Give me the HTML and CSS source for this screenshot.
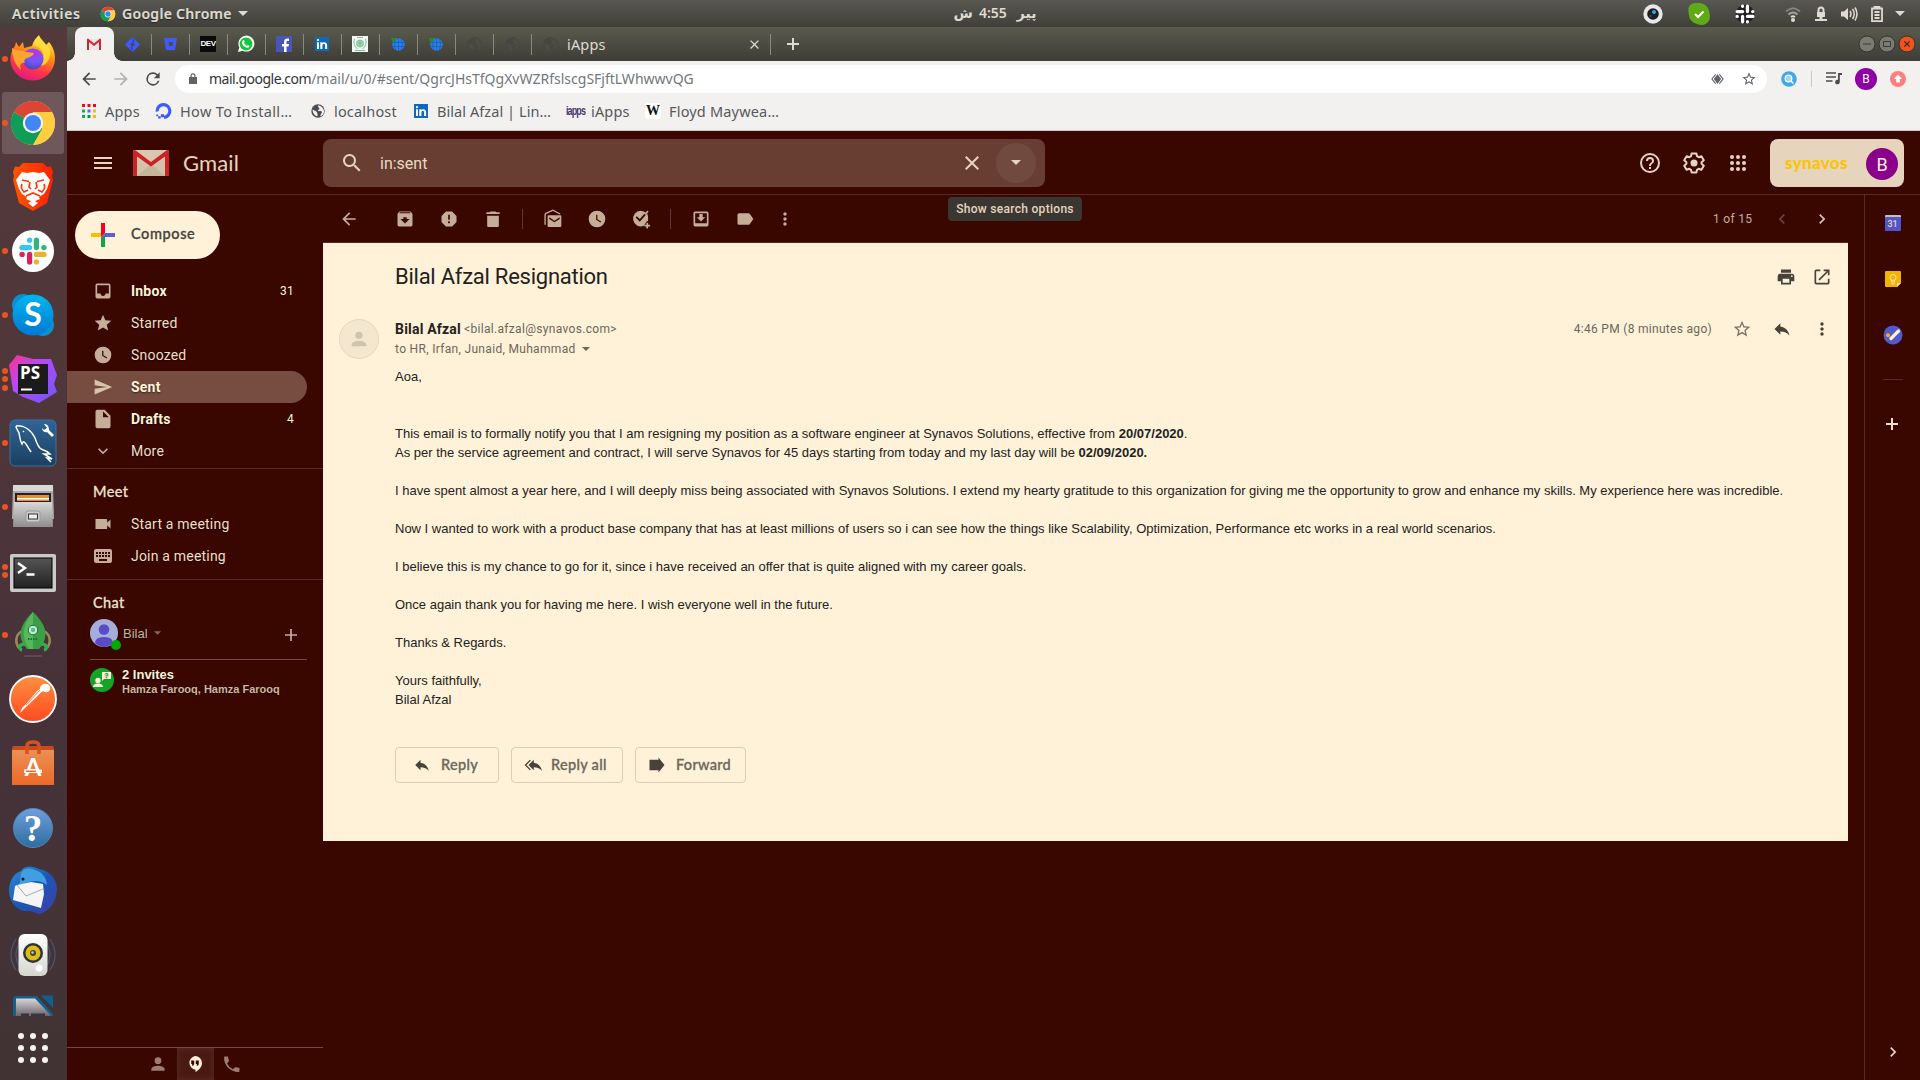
FILE: index.html
```html
<!DOCTYPE html>
<html lang="en">
<head>
<meta charset="utf-8">
<title>Bilal Afzal Resignation - Gmail</title>
<link rel="stylesheet" href="styles.css">
</head>
<body>
<svg class="defs" width="0" height="0" aria-hidden="true">
  <defs>
    <linearGradient id="ffGrad" x1="0.7" y1="0" x2="0.3" y2="1"><stop offset="0" stop-color="#fff44f"/><stop offset="0.35" stop-color="#ff980e"/><stop offset="0.7" stop-color="#ff3647"/><stop offset="1" stop-color="#e31587"/></linearGradient>
    <radialGradient id="ffGlobe" cx="0.6" cy="0.2" r="0.9"><stop offset="0" stop-color="#b833e1"/><stop offset="0.5" stop-color="#7059ff"/><stop offset="1" stop-color="#4a3ea8"/></radialGradient>
    <linearGradient id="braveGrad" x1="0" y1="0" x2="1" y2="0"><stop offset="0" stop-color="#ff5500"/><stop offset="1" stop-color="#ff2000"/></linearGradient>
    <linearGradient id="skyGrad" x1="0" y1="0" x2="0" y2="1"><stop offset="0" stop-color="#00b7f0"/><stop offset="1" stop-color="#0078d4"/></linearGradient>
    <linearGradient id="psGrad" x1="0" y1="0" x2="1" y2="1"><stop offset="0" stop-color="#ff318c"/><stop offset="0.4" stop-color="#b74af7"/><stop offset="1" stop-color="#6b57ff"/></linearGradient>
    <linearGradient id="sqlGrad" x1="0" y1="0" x2="0" y2="1"><stop offset="0" stop-color="#2f6596"/><stop offset="1" stop-color="#1c3f60"/></linearGradient>
    <linearGradient id="metal" x1="0" y1="0" x2="0" y2="1"><stop offset="0" stop-color="#d8d8d8"/><stop offset="1" stop-color="#8e8e8e"/></linearGradient>
    <linearGradient id="termGrad" x1="0" y1="0" x2="0" y2="1"><stop offset="0" stop-color="#555"/><stop offset="1" stop-color="#222"/></linearGradient>
    <linearGradient id="postGrad" x1="0" y1="0" x2="0" y2="1"><stop offset="0" stop-color="#ff9040"/><stop offset="1" stop-color="#ff4a20"/></linearGradient>
    <linearGradient id="softGrad" x1="0" y1="0" x2="0" y2="1"><stop offset="0" stop-color="#e8935a"/><stop offset="1" stop-color="#ee6a26"/></linearGradient>
    <linearGradient id="helpGrad" x1="0" y1="0" x2="0" y2="1"><stop offset="0" stop-color="#6f9fdb"/><stop offset="1" stop-color="#2d6d9f"/></linearGradient>
    <linearGradient id="birdGrad" x1="0" y1="0" x2="1" y2="1"><stop offset="0" stop-color="#2a8fd8"/><stop offset="0.5" stop-color="#1d56b8"/><stop offset="1" stop-color="#3b3fa8"/></linearGradient>
    <linearGradient id="spkGrad" x1="0" y1="0" x2="0" y2="1"><stop offset="0" stop-color="#ffffff"/><stop offset="1" stop-color="#d5d5d0"/></linearGradient>
    <linearGradient id="pageGrad" x1="0" y1="0" x2="0" y2="1"><stop offset="0" stop-color="#d5d5d8"/><stop offset="0.5" stop-color="#5a4c52"/></linearGradient>
  </defs>
  <symbol id="chrome" viewBox="0 0 48 48">
    <circle cx="24" cy="24" r="22" fill="#ffcd40"/>
    <path d="M24 24 4.900 13A22 22 0 0 1 43 13H24Z" fill="#db4437"/>
    <path d="M4.900 13A22 22 0 0 0 24 46l9.500-16.500L24 24Z" fill="#0f9d58"/>
    <path d="M43 13a22 22 0 0 1-19 33l9.500-16.500V13Z" fill="#ffcd40"/>
    <circle cx="24" cy="24" r="10.200" fill="#f1f1f1"/><circle cx="24" cy="24" r="8" fill="#4285f4"/>
  </symbol>
  <symbol id="slack" viewBox="0 0 28 28">
    <g stroke-width="5.200" stroke-linecap="round" fill="none">
      <path d="M3 10.600h7.600" stroke="#36c5f0"/><path d="M10.600 3v.2" stroke="#36c5f0"/>
      <path d="M17.400 3v7.600" stroke="#2eb67d"/><path d="M25 10.600h-.2" stroke="#2eb67d"/>
      <path d="M17.400 17.400H25" stroke="#ecb22e"/><path d="M17.400 25v-.2" stroke="#ecb22e"/>
      <path d="M10.600 17.400V25" stroke="#e01e5a"/><path d="M3 17.400h.2" stroke="#e01e5a"/>
    </g>
  </symbol>
  <symbol id="linkedin" viewBox="0 0 14 14"><path fill="#0e6ab8" d="M0 0h14v14H0z"/><path fill="#fff" d="M2 5.300h2V12H2zM3 2a1.100 1.100 0 1 1 0 2.200A1.100 1.100 0 0 1 3 2zM5.300 5.300h1.900v.9c.8-1.500 4.900-1.700 4.900 1.700V12h-2V8.500c0-2-2.700-1.800-2.700 0V12H5.300z"/></symbol>
  <symbol id="world" viewBox="0 0 16 16"><circle cx="8.500" cy="8.500" r="6.200" fill="#2b7de9"/><path d="M2.500 6.500h12M2.500 10.500h12M8.500 2v13M5.500 3q-2 5.500 0 11M11.500 3q2 5.500 0 11" stroke="#1a56a8" stroke-width=".6" fill="none"/><path d="M1 2h5.500L3.500 8z" fill="#0e9a3a"/><circle cx="3.600" cy="3.600" r=".9" fill="#b33"/></symbol>
  <symbol id="globe" viewBox="0 0 24 24"><circle cx="12" cy="12" r="11.500"/><path class="land" d="M3 9c2 3 6 2 7 5s2 3 1 7c-5-1-9-6-8-12zM11 2c3 1 0 3 2 4s2 3 0 4-1 3 2 2 5 2 3 4-1 4-3 5c7-1 9-8 6-13-2-4-6-6-10-6z"/></symbol>
  <symbol id="gmail" viewBox="0 0 36 26"><rect width="36" height="26" rx="2" fill="#d9c8b0"/><path d="M4 26V8l14 9L32 8v18z" fill="#d3c2aa"/><path d="M4 26 18 14l14 12z" fill="#c7b59b"/><path d="M2 0 18 12 34 0q2 0 2 2v22q0 2-2 2h-2V6.500L18 16.500 4 6.500V26H2q-2 0-2-2V2q0-2 2-2z" fill="#cf2026"/></symbol>
  <symbol id="back" viewBox="0 0 24 24"><path d="M20 11H7.830l5.590-5.590L12 4l-8 8 8 8 1.410-1.410L7.830 13H20z"/></symbol>
  <symbol id="more" viewBox="0 0 24 24"><path d="M12 8c1.100 0 2-.9 2-2s-.9-2-2-2-2 .9-2 2 .9 2 2 2zm0 2c-1.100 0-2 .9-2 2s.9 2 2 2 2-.9 2-2-.9-2-2-2zm0 6c-1.100 0-2 .9-2 2s.9 2 2 2 2-.9 2-2-.9-2-2-2z"/></symbol>
  <symbol id="star" viewBox="0 0 24 24"><path d="M22 9.240l-7.190-.62L12 2 9.190 8.630 2 9.240l5.460 4.730L5.820 21 12 17.270 18.180 21l-1.630-7.030zM12 15.400l-3.760 2.270 1-4.280-3.320-2.880 4.380-.38L12 6.100l1.710 4.040 4.380.38-3.320 2.880 1 4.280z"/></symbol>
  <symbol id="reply" viewBox="0 0 24 24"><path d="M10 9V5l-7 7 7 7v-4.100c5 0 8.500 1.600 11 5.100-1-5-4-10-11-11z"/></symbol>
  <symbol id="person" viewBox="0 0 24 24"><path d="M12 12a4 4 0 1 0 0-8 4 4 0 0 0 0 8zm0 2c-2.670 0-8 1.340-8 4v2h16v-2c0-2.660-5.330-4-8-4z"/></symbol>
  <symbol id="clock" viewBox="0 0 24 24"><path d="M12 2a10 10 0 1 0 0 20 10 10 0 0 0 0-20zm4.200 14.200L11 13V7h1.500v5.200l4.500 2.700z"/></symbol>
  <symbol id="chev" viewBox="0 0 24 24"><path d="M10 6 8.590 7.410 13.170 12l-4.580 4.590L10 18l6-6z"/></symbol>
  <symbol id="plus" viewBox="0 0 24 24"><path d="M19 13h-6v6h-2v-6H5v-2h6V5h2v6h6z"/></symbol>
  <symbol id="down" viewBox="0 0 10 5"><path d="M0 0h10L5 5z"/></symbol>
  <symbol id="close" viewBox="0 0 24 24"><path d="M19 6.410 17.590 5 12 10.590 6.410 5 5 6.410 10.590 12 5 17.590 6.410 19 12 13.410 17.590 19 19 17.590 13.410 12z"/></symbol>
</svg>

<header class="panel">
  <div class="panel-left">
    <span class="panel-text activities">Activities</span>
    <svg class="app-ico"><use href="#chrome"/></svg>
    <span class="panel-text appname">Google Chrome</span>
    <svg class="caret"><use href="#down"/></svg>
  </div>
  <div class="clock" dir="rtl"><span class="day">پیر</span><span class="time">4:55</span><span class="ampm">ش</span></div>
  <div class="tray">
    <svg width="20" height="20" viewBox="0 0 20 20"><circle cx="10" cy="10" r="9.700" fill="#e8e8e8"/><circle cx="10" cy="10" r="5.800" fill="#1b1f26"/><circle cx="11" cy="8" r="2" fill="#3aa0e8"/><circle cx="7.500" cy="12" r="1" fill="#555"/></svg>
    <svg width="22" height="22" viewBox="0 0 22 22"><path fill="#60a917" d="M6 0h6c6 1 9 5 9.500 10 1.500 6-1 11-7 12C7 22 1 18 .8 11 0 5 0 2 6 0z"/><path d="m7 11 3 3 5.500-5.500" stroke="#fff" stroke-width="2.200" fill="none"/></svg>
    <svg width="20" height="20" viewBox="0 0 28 28"><circle cx="14" cy="14" r="13" fill="#222"/><g stroke="#fff" stroke-width="4.600" stroke-linecap="round"><path d="M3 10.600h7.600M10.600 3v.2M17.400 3v7.600M25 10.600h-.2M17.400 17.400H25M17.400 25v-.2M10.600 17.400V25M3 17.400h.2"/></g></svg>
    <svg width="16" height="16" viewBox="0 0 16 16" fill="none"><path d="M1 5.500q7-6.500 14 0" stroke="#85847f" stroke-width="2"/><path d="M3.500 8.500q4.500-4 9 0" stroke="#a5a49f" stroke-width="2"/><path d="M6 11q2-1.500 4 0" stroke="#dfdbd2" stroke-width="2"/><circle cx="8" cy="14" r="2" fill="#dfdbd2"/></svg>
    <svg width="14" height="16" viewBox="0 0 14 16" fill="#dfdbd2"><path d="M3.500 6V4a3.500 3.500 0 0 1 7 0v2h.5v5H8.500v2H13v2H1v-2h4.500v-2H3V6zm2 0h3V4a1.500 1.500 0 0 0-3 0z" /></svg>
    <svg width="18" height="16" viewBox="0 0 18 16"><path d="M1 5.500h3L8 2v12l-4-3.500H1z" fill="#dfdbd2"/><path d="M10 5q2 3 0 6M12.500 3q3.500 5 0 10M15 1.500q4 6.500 0 13" stroke="#dfdbd2" stroke-width="1.500" fill="none"/></svg>
    <svg width="14" height="18" viewBox="0 0 14 18"><path d="M2 3.500h10v12.700H2zM4.500 3V2h5v1M4.500 7h5M4.500 10h5M4.500 13h5" stroke="#dfdbd2" stroke-width="1.800" fill="none"/></svg>
    <svg class="caret"><use href="#down"/></svg>
  </div>
</header>

<div class="desktop">
<nav class="dock">
  <div class="app firefox"><i class="dots"><b></b></i>
    <svg viewBox="0 0 48 48"><path d="M30 1c1 4 5 6 7 10l3-3c5 6 7 13 5.500 21a22.500 22.500 0 0 1-43 3C0 25 2 17 6 12l1-4 3 5 4-5 1 6 8-2c1-5 4-8 7-11z" fill="url(#ffGrad)"/><circle cx="24" cy="25" r="10.500" fill="url(#ffGlobe)"/><path d="M3 14c5 3 9 2 14 4l8 1c-1 3-4 4-7 5-3 1-3 3-2 5-6-1-5 4-4 7-6-5-9-13-9-22z" fill="#ffa52e"/><path d="M24 12q5-1 9 5 4 8-1 15c7-2 10-9 9-16-2-5-8-8-11-14-3 3-5 6-6 10z" fill="#ffdf3e" opacity=".85"/></svg></div>
  <div class="app current"><i class="dots"><b></b></i><svg viewBox="0 0 48 48"><use href="#chrome"/></svg></div>
  <div class="app"><svg viewBox="0 0 48 48"><path d="M14 0h20l4 4 4-.5L44 9l-1 4 1 4-6 23-14 8-14-8L4 17l1-4-1-4 2-5.500 4 .5z" fill="url(#braveGrad)"/><path d="m13 9 5 1 6-1 6 1 5-1 6 8-3 9-3 5-5 3 1 2-7 3-7-3 1-2-5-3-3-5-3-9z" fill="#fff"/><path d="m24 37 5 3-5 4-5-4z" fill="#fff"/><path d="m13 17 7 1.500M35 17l-7 1.500M21 19l-1 5 2 2M27 19l1 5-2 2M13 21q-2 4 2 8l4-2M35 21q2 4-2 8l-4-2M17 33l7-3 7 3" stroke="#ff3a00" stroke-width="1.700" fill="none"/></svg></div>
  <div class="app"><i class="dots"><b></b></i><svg viewBox="0 0 48 48"><circle cx="24" cy="24" r="21" fill="#fff"/><use href="#slack" x="10" y="10" width="28" height="28"/></svg></div>
  <div class="app"><i class="dots"><b></b></i><svg viewBox="0 0 48 48"><circle cx="14" cy="14" r="11" fill="#0a90cf"/><circle cx="34" cy="34" r="11" fill="#0a90cf"/><circle cx="24" cy="24" r="20.500" fill="url(#skyGrad)"/><text x="24" y="35" text-anchor="middle" class="skype-s">S</text></svg></div>
  <div class="app"><i class="dots"><b></b><b></b><b></b></i><svg viewBox="0 0 48 48"><path d="M8 0l16 4 18 0 6 16-3 9 3 8-18 11-16-6-10-6L0 10z" fill="url(#psGrad)"/><path d="M9 9h30v30H9z" fill="#1b1b1b"/><path d="M12 33.500h11v2H12z" fill="#fff"/><text x="11" y="24" class="ps">PS</text></svg></div>
  <div class="app"><i class="dots"><b></b></i><svg viewBox="0 0 48 48"><rect x="1" y="1" width="46" height="46" rx="5" fill="url(#sqlGrad)" stroke="#3a72a4"/><path d="M7 7c8-1 15 4 19 12 2 6 3 9 6 11 3 1 7 3 9 5h-6l8 5-5-1 4 4M7 7c0 3 2 4 3 7 1 5 1 8 3 11 1-3 2-3 4 0l5 8M14 12l1 1" stroke="#fff" stroke-width="1.500" fill="none"/><path d="m35 5 3 4-3 2-2-2c0 3 3 5 5 4l5 5 2-2-5-5c0-4-2-6-5-6z" fill="#fff"/></svg></div>
  <div class="app"><i class="dots"><b></b></i><svg viewBox="0 0 48 48"><path d="M4 2h40l1 34H3z" fill="#aaa"/><path d="M4 2h40v6H4z" fill="#d9d9d9"/><path d="M6 10h36v9H6z" fill="#222"/><path d="M8 12h32v6H8z" fill="#e88b35"/><path d="M8 15h32v1.500H8z" fill="#fff"/><path d="M5 19h38l1 25H4z" fill="url(#metal)"/><rect x="17" y="28" width="14" height="11" rx="2" fill="#ccc" stroke="#999"/><rect x="19.500" y="31" width="9" height="5" fill="#eee" stroke="#333"/></svg></div>
  <div class="app"><i class="dots"><b></b><b></b></i><svg viewBox="0 0 48 48"><rect x="1" y="7" width="46" height="38" rx="2" fill="#c9c9c9"/><rect x="5" y="11" width="38" height="30" fill="url(#termGrad)" stroke="#000"/><path d="m9 16 7 5-7 5M17.500 27.500h8" stroke="#fff" stroke-width="2.400" fill="none"/></svg></div>
  <div class="app"><i class="dots"><b></b></i><svg viewBox="0 0 48 48"><path d="M13 20c-7 4-7 12-3 17M35 20c7 4 7 12 3 17" stroke="#9a8a5c" stroke-width="2.500" fill="none"/><path d="M24 1C8 16 9 28 18 38h12C39 28 40 16 24 1z" fill="#3c9f45"/><path d="M24 1C12 16 13 28 20 38h4z" fill="#55b85c"/><circle cx="24" cy="19" r="4.800" fill="#bfeecb" stroke="#1f6a3a"/><circle cx="24" cy="19" r="2.200" fill="#58b9a0"/><path d="M19 28h10" stroke="#1e7033" stroke-width="2" stroke-dasharray="1.500 1"/><path d="M16 33c-6 0-7 5-3 6M32 33c6 0 7 5 3 6" stroke="#2fae4e" stroke-width="3.500" fill="none"/><path d="M15 45h18" stroke="#6c6266"/></svg></div>
  <div class="app"><svg viewBox="0 0 48 48"><circle cx="24" cy="24" r="23" fill="url(#postGrad)" stroke="#fff" stroke-width="1.800"/><path d="M36 9a4.200 4.200 0 1 1-2 7L19 30l-8 8 2-5 4-4 12-14 2-1c0-3 2-5 5-5z" fill="#fff"/><path d="m17 30 14-15M20 31l13-14" stroke="#ff7434" stroke-width=".9"/></svg></div>
  <div class="app"><svg viewBox="0 0 48 48"><path d="M4 8h40l1 4v34H3V12z" fill="url(#softGrad)"/><path d="M4 7h40l1 4H3z" fill="#c94a1a"/><path d="M18 15V7q0-4 6-4t6 4v8" stroke="#d9501e" stroke-width="3.500" fill="none"/><text x="24" y="37" text-anchor="middle" class="soft-a">A</text><path d="M15 30.500h18v3.500H15z" fill="#fff"/><path d="M17 31.500h10v1.500H17z" fill="#ee6a26"/></svg></div>
  <div class="app"><svg viewBox="0 0 48 48"><circle cx="24" cy="25" r="19.500" fill="url(#helpGrad)" stroke="#4f88bd"/><text x="24" y="38" text-anchor="middle" class="help-q">?</text></svg></div>
  <div class="app"><svg viewBox="0 0 48 48"><path d="M12 4C16-2 24-1 30 2c10 1 18 10 18 20 0 12-8 23-18 25l-9-3C8 46 0 34 0 24 0 14 5 6 12 4z" fill="url(#birdGrad)"/><path d="M12 6c3-6 11-5 14-3 6 1 12 8 12 15-6-5-14-5-22-2l-6 5z" fill="#3f9fe0"/><path d="m8 18 14-3 12 2 1 10-3 14-28-8 2-14z" fill="#f5f5f5"/><path d="m8 18 9 11 17-7" stroke="#aaa" fill="none"/><circle cx="14" cy="12" r="1.500" fill="#111"/></svg></div>
  <div class="app"><svg viewBox="0 0 48 48"><path d="M7 8Q-3 24 7 39M41 8q10 16 0 31M11 11Q3 24 11 36M37 11q8 13 0 25" stroke="#4a5674" stroke-width="1.200" fill="none"/><rect x="9.500" y="3" width="29" height="42" rx="6" fill="url(#spkGrad)"/><circle cx="24" cy="22" r="10" fill="#333"/><circle cx="24" cy="22" r="7.500" fill="#e0bd15"/><circle cx="24" cy="22" r="3" fill="#444"/><circle cx="23.500" cy="21.500" r="1.200" fill="#ccc"/><circle cx="30" cy="37" r="3.500" fill="#fff"/></svg></div>
  <div class="app clipped"><svg viewBox="0 0 48 48"><path d="M4 6q0-4 3-4h21l16 18v26H4z" fill="#145f8c"/><path d="M7 4.500h19l15 16v26H7z" fill="url(#pageGrad)"/><path d="M32 1.500h12V14z" fill="#0f6090"/><path d="M12 19.500h8v3h-8zM22 19.500h14v3H22z" fill="#333843"/></svg></div>
  <div class="show-apps"><b></b><b></b><b></b><b></b><b></b><b></b><b></b><b></b><b></b></div>
</nav>

<main class="window">
  <div class="tabs">
    <div class="tab active"><svg width="14" height="12" viewBox="0 0 14 12"><path d="M0 1h14v11H0z" fill="#e9e9e9"/><path d="M1 .5 7 5.500l6-5q1 0 1 1V12h-2V4L7 8 2 4v8H0V1.500q0-1 1-1z" fill="#d8232a"/></svg></div>
    <div class="tab"><svg width="15" height="15" viewBox="0 0 15 15"><path d="m7.500 0 7.500 7.500L7.500 15 0 7.500z" fill="#3e5bfd"/><path d="m7.500 5 2.500 2.500L7.500 10 5 7.500z" fill="#4a4b43"/><path d="m7.500 0 2 5-2 0zM7.500 15l-2-5h2z" fill="#2338c0"/></svg></div>
    <div class="tab"><svg width="13" height="12" viewBox="0 0 13 12"><path d="M0 0h13l-2 12H2zM4.500 4l.8 4h3L9 4z" fill="#3e5bfd" fill-rule="evenodd"/></svg></div>
    <div class="tab"><span class="fav-dev">DEV</span></div>
    <div class="tab"><svg width="16" height="16" viewBox="0 0 24 24"><path d="M0 24 2 17A12 12 0 1 1 7 22z" fill="#fff"/><circle cx="12" cy="12" r="9.600" fill="#0bc93a"/><path d="M7.500 6.500c1-1 2 0 2.500 2l-1 1.500c1 2 2.500 3.500 4.500 4.500l1.500-1c2 .8 2.500 1.500 2 2.500-1 2-4 2-7 0s-4.500-5-4-7.500z" fill="#fff"/></svg></div>
    <div class="tab"><svg width="16" height="16" viewBox="0 0 16 16"><path d="M0 0h16v16H0z" fill="#4a55b8"/><path d="M8 16v-5.500H6V8h2V6c0-2.500 1.500-3.500 3.500-3.500H13v2.400h-1.200c-1 0-1.300.4-1.300 1.300V8H13l-.4 2.500h-2.100V16z" fill="#fff"/></svg></div>
    <div class="tab"><svg width="14" height="14"><use href="#linkedin"/></svg></div>
    <div class="tab"><svg width="16" height="16" viewBox="0 0 16 16"><path d="M0 0h16v16H0z" fill="#f2f7f3"/><circle cx="8" cy="7.500" r="3.500" fill="#a8d6b8" stroke="#6fb78c" stroke-width=".8"/><path d="M2.500 3q-2 6 3 10M13.500 3q2 6-3 10M5 1.500h6M3 14.500h10M8 5v5M6 7h4" stroke="#6fb78c" stroke-width=".9" fill="none"/></svg></div>
    <div class="tab"><svg width="16" height="16"><use href="#world"/></svg></div>
    <div class="tab"><svg width="16" height="16"><use href="#world"/></svg></div>
    <div class="tab"><svg class="fav-globe"><use href="#globe"/></svg></div>
    <div class="tab"><svg class="fav-globe"><use href="#globe"/></svg></div>
    <div class="tab wide"><svg class="fav-globe"><use href="#globe"/></svg><span class="tab-title">iApps</span><svg class="tab-close"><use href="#close"/></svg></div>
    <svg class="tab-new" viewBox="0 0 12 12"><path d="M6 0v12M0 6h12" stroke="#dedbd0" stroke-width="2"/></svg>
    <div class="win-btns">
      <svg viewBox="0 0 18 18"><circle cx="9" cy="9" r="8" fill="#7b7a73" stroke="#35352f"/><path d="M5 9h8" stroke="#3a3934"/></svg>
      <svg viewBox="0 0 18 18"><circle cx="9" cy="9" r="8" fill="#7b7a73" stroke="#35352f"/><path d="M5.500 6.500h7v5h-7z" stroke="#3a3934" fill="none"/></svg>
      <svg viewBox="0 0 18 18"><circle cx="9" cy="9" r="8" fill="#f0541e" stroke="#35352f"/><path d="m6.300 6.300 5.400 5.400m0-5.400-5.400 5.400" stroke="#4a1c08" stroke-width="1.200"/></svg>
    </div>
  </div>

  <div class="urlbar">
    <svg class="nav-ico"><use href="#back"/></svg>
    <svg class="nav-ico fwd"><use href="#back"/></svg>
    <svg class="nav-ico reload" viewBox="0 0 24 24"><path d="M17.650 6.350A8 8 0 1 0 19.730 14h-2.080A6 6 0 1 1 12 6c1.660 0 3.140.69 4.220 1.780L13 11h7V4z"/></svg>
    <div class="omnibox">
      <svg class="lock" viewBox="0 0 8 11"><path d="M1.500 4V2.700a2.500 2.500 0 0 1 5 0V4H8v7H0V4zm1.200 0h2.600V2.700a1.300 1.300 0 0 0-2.600 0z"/></svg>
      <span class="url"><span class="host">mail.google.com</span><span class="path">/mail/u/0/#sent/QgrcJHsTfQgXvWZRfslscgSFjftLWhwwvQG</span></span>
      <svg class="eye" viewBox="0 0 14 12"><path d="M5 1 1 6l4 5M9 1l4 5-4 5" stroke="#5f6368" stroke-width="1.200" fill="none"/><path d="m7 1 4 5-4 5-4-5z" fill="#5f6368"/></svg>
      <svg class="bm-star"><use href="#star"/></svg>
    </div>
    <svg class="ext" viewBox="0 0 16 16"><circle cx="8" cy="8" r="7.800" fill="#3fa9ee"/><circle cx="7.500" cy="7.500" r="3.300" fill="#9fd6fa" stroke="#fff" stroke-width="1.300"/><path d="m10 10 2.500 2.500" stroke="#fff" stroke-width="1.500"/></svg>
    <i class="ext-sep"></i>
    <svg class="playlist" viewBox="0 0 16 13"><path d="M0 1h10M0 5h10M0 9h6.500" stroke="#4c4c4c" stroke-width="1.700"/><path d="M12 1h4v2h-2.200v7A2.300 2.300 0 1 1 12 7.800z" fill="#4c4c4c"/></svg>
    <span class="profile">B</span>
    <svg class="update" viewBox="0 0 16 16"><circle cx="8" cy="8" r="8" fill="#ff7f7f"/><path d="m8 3.500 4.200 4.500H9.800v3.500H6.200V8H3.800z" fill="#fff"/></svg>
  </div>

  <div class="bookmarks">
    <svg class="bm-ico" viewBox="0 0 14 14"><path fill="#f02" d="M0 0h3v3H0zM5.500 0h3v3h-3zM11 0h3v3h-3z"/><path fill="#0ab04a" d="M0 5.500h3v3H0zM0 11h3v3H0z"/><path fill="#4a6cff" d="M5.500 5.500h3v3h-3z"/><path fill="#fb0" d="M11 5.500h3v3h-3zM11 11h3v3h-3z"/><path fill="#0a9a3a" d="M5.500 11h3v3h-3z"/></svg>
    <span class="bm apps">Apps</span>
    <svg class="bm-do" viewBox="0 0 16 16"><path d="M2 8a6 6 0 1 1 6.500 5.500" stroke="#3d5bfd" stroke-width="3" fill="none"/><path d="M5.500 10.500h3v3h-3zM3 12.500h2.300v2.200H3zM1.200 10.800H3v1.700H1.200z" fill="#3d5bfd"/></svg>
    <span class="bm install">How To Install…</span>
    <svg class="bm-globe"><use href="#globe"/></svg>
    <span class="bm local">localhost</span>
    <svg class="bm-ico"><use href="#linkedin"/></svg>
    <span class="bm profile-link">Bilal Afzal | Lin…</span>
    <span class="bm-iapps">iapps</span>
    <span class="bm iapps">iApps</span>
    <span class="bm-w">W</span>
    <span class="bm floyd">Floyd Maywea…</span>
  </div>

  <div class="gmail">
    <header class="ghead">
      <svg class="burger" viewBox="0 0 18 12"><path d="M0 0h18v2H0zM0 5h18v2H0zM0 10h18v2H0z"/></svg>
      <svg class="glogo"><use href="#gmail"/></svg>
      <span class="gname">Gmail</span>
      <div class="search">
        <svg class="mag" viewBox="0 0 24 24"><path d="M15.500 14h-.79l-.28-.27A6.500 6.500 0 1 0 13.730 14.430l.27.28v.79l5 4.990L20.490 19zm-6 0a4.500 4.500 0 1 1 0-9 4.500 4.500 0 0 1 0 9z"/></svg>
        <span class="query">in:sent</span>
        <svg class="clear"><use href="#close"/></svg>
        <div class="opts"><svg class="caret"><use href="#down"/></svg><span class="tooltip">Show search options</span></div>
      </div>
      <div class="gtools">
        <svg viewBox="0 0 24 24"><path d="M11 18h2v-2h-2zm1-16a10 10 0 1 0 0 20 10 10 0 0 0 0-20zm0 18a8 8 0 1 1 0-16 8 8 0 0 1 0 16zm0-14a4 4 0 0 0-4 4h2a2 2 0 1 1 4 0c0 2-3 1.750-3 5h2c0-2.250 3-2.500 3-5a4 4 0 0 0-4-4z"/></svg>
        <svg viewBox="0 0 24 24"><path d="M9.600 2.500h4.800l.6 2.700 1.700 1 2.700-.9 2.400 4-2.200 1.900v1.600l2.200 1.900-2.400 4-2.700-.9-1.700 1-.6 2.700H9.600L9 18.800l-1.700-1-2.700.9-2.400-4 2.200-1.900v-1.600L2.200 9.300l2.400-4 2.700.9 1.700-1z" fill="none" stroke="#e6d4bd" stroke-width="2" stroke-linejoin="round"/><circle cx="12" cy="12" r="3.500"/></svg>
        <svg viewBox="0 0 24 24"><circle cx="6" cy="6" r="2"/><circle cx="12" cy="6" r="2"/><circle cx="18" cy="6" r="2"/><circle cx="6" cy="12" r="2"/><circle cx="12" cy="12" r="2"/><circle cx="18" cy="12" r="2"/><circle cx="6" cy="18" r="2"/><circle cx="12" cy="18" r="2"/><circle cx="18" cy="18" r="2"/></svg>
      </div>
      <div class="account"><span class="brand">synavos</span><span class="face">B</span></div>
    </header>

    <div class="gbody">
      <aside class="side">
        <button class="compose"><svg viewBox="0 0 24 24"><path d="M10 0h4v10l-4 4z" fill="#f3031f"/><path d="M0 10h10v4H0z" fill="#fb0"/><path d="M10 14h4v10h-4z" fill="#0aa945"/><path d="M14 10h10v4H10z" fill="#5b5fd0"/></svg><span>Compose</span></button>
        <ul class="folders">
          <li class="bold"><svg viewBox="0 0 24 24"><path d="M19 3H5a2 2 0 0 0-2 2v14a2 2 0 0 0 2 2h14a2 2 0 0 0 2-2V5a2 2 0 0 0-2-2zm0 12h-4c0 1.660-1.350 3-3 3s-3-1.340-3-3H5V5h14z"/></svg><span>Inbox</span><em>31</em></li>
          <li><svg viewBox="0 0 24 24"><path d="M12 17.270 18.180 21l-1.640-7.030L22 9.240l-7.190-.61L12 2 9.190 8.630 2 9.240l5.460 4.730L5.820 21z"/></svg><span>Starred</span></li>
          <li><svg><use href="#clock"/></svg><span>Snoozed</span></li>
          <li class="bold selected"><svg viewBox="0 0 24 24"><path d="M2 21 23 12 2 3v7l15 2-15 2z"/></svg><span>Sent</span></li>
          <li class="bold"><svg viewBox="0 0 24 24"><path d="M14 1H5a2 2 0 0 0-2 2v18q0 2 2 2h14q2 0 2-2V8zm-2 2 7 7h-7z"/></svg><span>Drafts</span><em>4</em></li>
          <li><svg class="rot"><use href="#chev"/></svg><span>More</span></li>
        </ul>
        <section class="meet">
          <h3>Meet</h3>
          <ul class="folders">
            <li><svg viewBox="0 0 24 24"><path d="M17 10.500V7a1 1 0 0 0-1-1H3v12h13a1 1 0 0 0 1-1v-3.500l4 4v-11z"/></svg><span>Start a meeting</span></li>
            <li><svg class="kbd" viewBox="0 0 18 14"><path fill-rule="evenodd" d="M2 0h14q2 0 2 2v10q0 2-2 2H2q-2 0-2-2V2q0-2 2-2zm0 3v2h2V3zm3 0v2h2V3zm3 0v2h2V3zm3 0v2h2V3zm3 0v2h2V3zM2 6v2h2V6zm3 0v2h2V6zm3 0v2h2V6zm3 0v2h2V6zm3 0v2h2V6zM5 10v2h8v-2z"/></svg><span>Join a meeting</span></li>
          </ul>
        </section>
        <section class="chat">
          <h3>Chat</h3>
          <div class="me"><span class="me-face"><svg viewBox="0 0 28 28"><circle cx="14" cy="14" r="14" fill="#a5aedb"/><circle cx="14" cy="10.500" r="5.300" fill="#5a4bc4"/><path d="M5 24q0-6 9-6t9 6q-9 8-18 0z" fill="#5a4bc4"/></svg><i></i></span><span>Bilal</span><svg class="me-caret"><use href="#down"/></svg><svg class="me-plus" viewBox="0 0 12 12"><path d="M6 0v12M0 6h12" stroke="#c5ad98" stroke-width="1.700"/></svg></div>
          <div class="invites"><svg viewBox="0 0 24 24"><circle cx="12" cy="12" r="12" fill="#13a526"/><circle cx="8" cy="12.500" r="2.700" fill="#fff2d8"/><path d="M3 19q0-3.500 5-3.500t5 3.500zM12 4h9v7h-7l-2 2z" fill="#fff2d8"/><text x="16.500" y="10.300" text-anchor="middle" class="inv-q">?</text></svg><div><strong>2 Invites</strong><small>Hamza Farooq, Hamza Farooq</small></div></div>
        </section>
        <footer class="side-tabs">
          <svg class="st"><use href="#person"/></svg>
          <span class="st-on"><svg viewBox="0 0 14 16"><path d="M7 0a7 7 0 0 1 7 7c0 4-3 7-6.500 9v-2.200A7 7 0 0 1 7 0z"/><path d="M3.200 4.500H6.200V8q0 1.500-2 2V8h-1zM7.800 4.500h3V8q0 1.500-2 2V8h-1z" fill="#3a0700"/></svg></span>
          <svg class="st" viewBox="0 0 24 24"><path d="M20 16.500c-1.500 0-2.500-.2-3.600-.6-.4-.1-.8 0-1 .3l-2.200 2A15 15 0 0 1 6 11.300l2-2.200c.3-.3.400-.7.300-1C8 7 7.700 6 7.500 4.500c0-.8-.4-1.500-1-1.500H4C3 3 2.500 3.500 2.500 4.500A17 17 0 0 0 19.500 21.500c1 0 1.500-.5 1.500-1.500v-2.500c0-.6-.5-1-1-1z"/></svg>
        </footer>
      </aside>

      <section class="content">
        <div class="toolbar">
          <svg class="i-back"><use href="#back"/></svg>
          <svg viewBox="0 0 24 24"><path d="m20.500 5.200-1.400-1.700C18.900 3.200 18.500 3 18 3H6c-.5 0-.9.200-1.200.5L3.500 5.200C3.200 5.600 3 6 3 6.500V19a2 2 0 0 0 2 2h14a2 2 0 0 0 2-2V6.500c0-.5-.2-.9-.5-1.300zM12 17.500 6.500 12H10v-2h4v2h3.500zM5.100 5l.8-1h12l.9 1z"/></svg>
          <svg viewBox="0 0 24 24"><path d="M15.730 3H8.270L3 8.270v7.460L8.270 21h7.460L21 15.730V8.270zM12 17.300a1.300 1.300 0 1 1 0-2.600 1.300 1.300 0 0 1 0 2.600zm1-4.300h-2V7h2z"/></svg>
          <svg class="i-del" viewBox="0 0 24 24"><path d="M5 8v12q0 1.500 1.500 1.500h11Q19 21.500 19 20V8zM20 4h-4l-1-1H9L8 4H4v2h16z"/></svg>
          <i class="sep"></i>
          <svg viewBox="0 0 24 24"><path d="M5.500 9q0-1.500 1.500-1.500h13.500Q22 7.500 22 9v11q0 1.500-1.500 1.500H7Q5.500 21.500 5.500 20zm2 1v2l6.200 4 6.300-4v-2l-6.300 4z" fill-rule="evenodd"/><path d="M2.500 19V7q0-1 1-1.700L12 1.500 20.500 6" stroke="#c5ad98" stroke-width="1.600" fill="none"/></svg>
          <svg><use href="#clock"/></svg>
          <svg class="i-task" viewBox="0 0 24 24"><path d="M11.500 2a9.500 9.500 0 0 1 6 2.200l-7 7.800L7 8.800 5.500 10.200l5 5 9-10 1 4V14q-3 1-3.500 4l-2 2.500A9.500 9.500 0 1 1 11.500 2z"/><path d="m16.500 6.500 4-4M19.500 16.500v7M16 20h7" stroke="#c5ad98" stroke-width="2"/></svg>
          <i class="sep"></i>
          <svg viewBox="0 0 24 24"><path fill-rule="evenodd" d="M5 3h14a2 2 0 0 1 2 2v14a2 2 0 0 1-2 2H5a2 2 0 0 1-2-2V5c0-1.100.9-2 2-2zm0 2v12h14V5zM10 6h4v4h3l-5 5-5-5h3z"/></svg>
          <svg class="i-label" viewBox="0 0 24 24"><path d="M17.630 5.840C17.270 5.330 16.670 5 16 5H5a2 2 0 0 0-2 2v10a2 2 0 0 0 2 2h11c.67 0 1.270-.33 1.630-.84L22 12z"/></svg>
          <svg><use href="#more"/></svg>
          <span class="count">1 of 15</span>
          <svg class="prev"><use href="#chev"/></svg>
          <svg class="next"><use href="#chev"/></svg>
        </div>
        <article class="mail">
          <div class="subject"><h1>Bilal Afzal Resignation</h1>
            <svg viewBox="0 0 24 24"><path d="M19 8H5a3 3 0 0 0-3 3v6h4v4h12v-4h4v-6a3 3 0 0 0-3-3zm-3 11H8v-5h8zm3-7a1 1 0 1 1 0-2 1 1 0 0 1 0 2zM18 3H6v4h12z"/></svg>
            <svg viewBox="0 0 24 24"><path d="M19 19H5V5h5V3H5a2 2 0 0 0-2 2v14a2 2 0 0 0 2 2h14a2 2 0 0 0 2-2v-5h-2zM14 3v2h3.590l-9.830 9.830 1.410 1.410L19 6.410V10h2V3z"/></svg>
          </div>
          <div class="sender">
            <span class="avatar"><svg><use href="#person"/></svg></span>
            <div class="who">
              <p><b>Bilal Afzal</b><span>&lt;bilal.afzal@synavos.com&gt;</span></p>
              <p><span>to HR, Irfan, Junaid, Muhammad</span><svg class="to-caret"><use href="#down"/></svg></p>
            </div>
            <div class="meta"><span>4:46 PM (8 minutes ago)</span><svg class="mstar"><use href="#star"/></svg><svg><use href="#reply"/></svg><svg><use href="#more"/></svg></div>
          </div>
          <div class="text">Aoa,<br><br><br>This email is to formally notify you that I am resigning my position as a software engineer at Synavos Solutions, effective from <b>20/07/2020</b>.<br>As per the service agreement and contract, I will serve Synavos for 45 days starting from today and my last day will be <b>02/09/2020.</b><br><br>I have spent almost a year here, and I will deeply miss being associated with Synavos Solutions. I extend my hearty gratitude to this organization for giving me the opportunity to grow and enhance my skills. My experience here was incredible.<br><br>Now I wanted to work with a product base company that has at least millions of users so i can see how the things like Scalability, Optimization, Performance etc works in a real world scenarios.<br><br>I believe this is my chance to go for it, since i have received an offer that is quite aligned with my career goals.<br><br>Once again thank you for having me here. I wish everyone well in the future.<br><br>Thanks &amp; Regards.<br><br>Yours faithfully,<br>Bilal Afzal</div>
          <div class="actions">
            <button class="r1"><svg><use href="#reply"/></svg><span>Reply</span></button>
            <button class="r2"><svg viewBox="0 0 24 24"><path d="M8.500 5.500 2 12l6.500 6.500" stroke="#47433a" stroke-width="1.800" fill="none"/><path d="M13 9V5l-7 7 7 7v-4.100c5 0 8.500 1.600 11 5.100-1-5-4-10-11-11z"/></svg><span>Reply all</span></button>
            <button class="r3"><svg viewBox="0 0 24 24"><path d="M2 5h12V2l8 10-8 10v-3H2z"/></svg><span>Forward</span></button>
          </div>
        </article>
      </section>

      <aside class="rail">
        <span class="cal">31</span>
        <svg class="keep" viewBox="0 0 16 16"><path d="M1 0h14q1 0 1 1v11l-4 4H1q-1 0-1-1V1q0-1 1-1z" fill="#f5b400"/><path d="M12 16v-4h4z" fill="#fbe29a"/><circle cx="8" cy="6.500" r="3" stroke="#fbe6b0" fill="none"/><path d="M6.500 9v2h3V9M6.500 12.800h3" stroke="#fbe6b0" fill="none"/></svg>
        <svg class="tasks" viewBox="0 0 20 20"><circle cx="10" cy="10" r="9.500" fill="#5558cc"/><path d="m8 13.500 7.500-7.500" stroke="#fff2d8" stroke-width="3.200" stroke-linecap="round"/><circle cx="5" cy="10.200" r="2" fill="#f5b400"/></svg>
        <i></i>
        <svg class="rplus" viewBox="0 0 12 12"><path d="M6 0v12M0 6h12" stroke="#efdfc6" stroke-width="2"/></svg>
        <svg class="rchev"><use href="#chev"/></svg>
      </aside>
    </div>
  </div>
</main>
</div>
</body>
</html>
```
FILE: styles.css
```css
* { box-sizing: border-box; }
html, body { height: 100%; }
body {
  margin: 0; width: 1920px; height: 1080px; overflow: hidden;
  display: flex; flex-direction: column;
  font-family: Roboto, "Liberation Sans", sans-serif; background: #3a0700;
}
svg { display: block; flex: none; overflow: visible; }
.defs { position: absolute; }
button { font: inherit; border: 0; padding: 0; margin: 0; background: none; }
h1, h3, p, ul { margin: 0; padding: 0; font-weight: 400; list-style: none; }
span, strong, small { white-space: nowrap; }

/* Desktop panel */
.panel {
  height: 27px; flex: none; display: grid; grid-template-columns: 1fr auto 1fr; align-items: center;
  background: linear-gradient(#595751, #403f3a); color: #dfdbd2;
  font-family: "Noto Sans", sans-serif; font-size: 14px; font-weight: 600;
}
.panel-left { display: flex; align-items: center; padding-left: 12px; }
.panel-text { line-height: 26px; text-shadow: 0 1px 1px #222; letter-spacing: .3px; -webkit-text-stroke: .2px #dfdbd2; }
.activities { width: 88px; letter-spacing: .6px; }
.app-ico { width: 16px; height: 16px; }
.appname { width: 110px; margin-left: 6px; }
.caret { width: 10px; height: 5px; fill: #dfdbd2; margin-left: 6px; }
.clock { display: flex; width: 85px; margin-right: -68px; font-family: "DejaVu Sans", sans-serif; line-height: 26px; }
.clock span { position: relative; top: -1px; }
.time { margin: 0 10px 0 6px; font-family: "Noto Sans", sans-serif; }
.tray { display: flex; align-items: center; justify-content: flex-end; padding-right: 15px; }
.tray svg:nth-child(1) { margin-right: 25px; }
.tray svg:nth-child(2) { margin-right: 25px; }
.tray svg:nth-child(3) { margin-right: 30px; }
.tray svg:nth-child(4) { margin-right: 13px; }
.tray svg:nth-child(5) { margin-right: 12px; }
.tray svg:nth-child(6) { margin-right: 12px; }
.tray .caret { margin-left: 11px; }

.desktop { flex: 1; display: flex; min-height: 0; }

/* Dock */
.dock {
  width: 67px; flex: none; display: flex; flex-direction: column;
  background: linear-gradient(#54393c, #50373a 30%, #47323a 65%, #413334);
}
.app { height: 64px; flex: none; display: flex; align-items: center; padding-left: 9px; position: relative; }
.app svg { width: 48px; height: 48px; }
.app.firefox { padding-bottom: 2px; }
.app.current { height: 62px; margin: 1px 3px 1px 2px; padding-left: 7px; border-radius: 3px; background: #6e585c; }
.dots { position: absolute; left: 2px; top: 0; height: 100%; display: flex; flex-direction: column; justify-content: center; gap: 2.500px; }
.current .dots { left: 0; }
.dots b { width: 6px; height: 6px; border-radius: 50%; background: #e95420; }
.app.clipped { height: 29px; align-items: flex-start; padding-top: 7px; overflow: hidden; }
.app.clipped svg { overflow: hidden; }
.show-apps { display: grid; grid-template-columns: repeat(3, 6px); gap: 6px; margin: 17px 0 0 18px; }
.show-apps b { width: 6px; height: 6px; border-radius: 50%; background: #f3f3f3; }
.skype-s { font: 700 32px Lato, sans-serif; fill: #fff; }
.ps { font: 700 17px "Open Sans", sans-serif; fill: #fff; }
.soft-a { font: 700 24px Lato, sans-serif; fill: #fff; }
.help-q { font: 700 37px "Liberation Serif", serif; fill: #fff; }

/* Browser window */
.window { flex: 1; min-width: 0; display: flex; flex-direction: column; }
.tabs { height: 34px; flex: none; display: flex; align-items: center; padding-left: 8px; background: linear-gradient(#5a5a4d, #3e3d38); }
.tab { width: 38px; height: 34px; flex: none; display: flex; align-items: center; justify-content: center; padding-right: 2px; position: relative; }
.tab:not(.active)::after { content: ""; position: absolute; right: 0; top: 7px; width: 1px; height: 21px; background: #8a8980; }
.tab:nth-child(2)::after { display: block; }
.tab.active { width: 39px; background: #f2f1f0; border-radius: 8px 8px 0 0; }
.tab.active::before, .tab.active::after { content: ""; position: absolute; bottom: 0; width: 8px; height: 8px; }
.tab.active::before { left: -8px; background: radial-gradient(circle at 0 0, transparent 7.500px, #f2f1f0 8px); }
.tab.active::after { right: -8px; background: radial-gradient(circle at 100% 0, transparent 7.500px, #f2f1f0 8px); }
.fav-dev { width: 16px; height: 16px; background: #0a0a0a; color: #fff; font: 700 8px/16px "Liberation Sans", sans-serif; text-align: center; letter-spacing: -.4px; }
.fav-globe { width: 15px; height: 15px; fill: #474742; }
.land { fill: var(--land, #4d4d47); }
.tab.wide { width: 239px; justify-content: flex-start; padding-left: 11px; }
.tab-title { font: 14.500px/34px "Noto Sans", sans-serif; letter-spacing: .18px; color: #dedbd0; margin-left: 9px; width: 180px; }
.tab-close { width: 15px; height: 15px; fill: #dedbd0; }
.tab-new { width: 12px; height: 12px; margin-left: 16px; }
.win-btns { margin-left: auto; display: flex; gap: 2px; padding-right: 4px; }
.win-btns svg { width: 18px; height: 18px; }

.urlbar { height: 36px; flex: none; display: flex; align-items: center; padding: 0 0 1px 12px; background: #f2f1f0; }
.nav-ico { width: 20px; height: 20px; fill: #4c4c4c; }
.nav-ico.fwd { transform: scaleX(-1); fill: #b0b0b0; margin-left: 12px; }
.nav-ico.reload { margin-left: 12px; margin-right: 12px; }
.omnibox { width: 1592px; height: 28px; border-radius: 14px; background: #fff; display: flex; align-items: center; padding: 0 10px 0 14px; }
.lock { width: 8px; height: 11px; fill: #5f6368; }
.url { flex: 1; margin-left: 12px; font: 14px/28px "Noto Sans", sans-serif; color: #72777c; }
.host { color: #333; letter-spacing: -.5px; }
.eye { width: 13px; height: 12px; }
.bm-star { width: 16px; height: 16px; fill: #5f6368; margin-left: 17px; }
.ext { width: 16px; height: 16px; margin-left: 14px; }
.ext-sep { width: 1px; height: 16px; background: #c8c8c8; margin-left: 14px; }
.playlist { width: 16px; height: 13px; margin-left: 14px; }
.profile { width: 22px; height: 22px; border-radius: 50%; background: #8e00a5; color: #fff; font-size: 12px; line-height: 22px; text-align: center; margin-left: 13px; }
.update { width: 16px; height: 16px; margin-left: 13px; }

.bookmarks { height: 34px; flex: none; display: flex; align-items: center; padding: 0 0 5px 15px; background: #f2f1f0; border-bottom: 1px solid #c8cbc9; }
.bm { font: 14.500px/28px "Noto Sans", sans-serif; color: #56585b; flex: none; letter-spacing: .18px; }
.bm-ico { width: 14px; height: 14px; margin-right: 9px; }
.apps { width: 50px; }
.bm-do { width: 17px; height: 17px; margin-right: 8px; }
.install { width: 131px; letter-spacing: .34px; }
.bm-globe { width: 14px; height: 14px; fill: #494c50; margin-right: 9px; --land: #f2f1f0; }
.local { width: 80px; }
.profile-link { width: 129px; letter-spacing: .07px; }
.bm-iapps { width: 25px; font: 700 9px/20px "Liberation Sans", sans-serif; color: #463870; transform: scaleY(1.400); letter-spacing: -.9px; flex: none; }
.iapps { width: 55px; }
.bm-w { width: 16px; height: 16px; margin: 0 8px 0 -1px; border-radius: 3px; background: #fff; font: 700 14px/16px "Liberation Serif", serif; color: #111; flex: none; text-align: center; }

/* Mail application */
.gmail { flex: 1; min-height: 0; display: flex; flex-direction: column; background: #3a0700; color: #e6d4bd; }
.ghead { height: 64px; flex: none; display: flex; align-items: center; padding-left: 27px; border-bottom: 1px solid #572b22; }
.burger { width: 18px; height: 12px; fill: #e6d4bd; }
.glogo { width: 36px; height: 26px; margin-left: 21px; }
.gname { font: 22px/30px Lato, sans-serif; letter-spacing: .15px; margin-left: 14px; width: 140px; }
.search { width: 722px; height: 48px; border-radius: 8px; background: #693e32; display: flex; align-items: center; padding: 0 9px 0 17px; }
.mag { width: 24px; height: 24px; fill: #e6d4bd; }
.query { font-size: 16px; margin-left: 16px; padding-top: 1px; flex: 1; color: #ead9c2; }
.clear { width: 24px; height: 24px; fill: #e6d4bd; margin-right: 12px; }
.opts { width: 40px; height: 40px; border-radius: 50%; background: #704a3e; position: relative; display: flex; align-items: center; justify-content: center; }
.opts .caret { fill: #e6d4bd; margin: 0; }
.tooltip { position: absolute; left: -48px; top: 54px; width: 134px; height: 24px; border-radius: 4px; background: #3a3733; text-align: center; font-size: 12px; font-weight: 500; line-height: 24px; letter-spacing: .3px; }
.gtools { display: flex; gap: 20px; margin-left: auto; margin-right: 20px; fill: #e6d4bd; }
.gtools svg { width: 24px; height: 24px; }
.account { width: 134px; height: 48px; border-radius: 8px; background: #e6d4bd; margin-right: 16px; display: flex; align-items: center; padding-left: 15px; }
.brand { font: 900 17px/48px Lato, sans-serif; letter-spacing: .3px; color: #fcc404; width: 81px; }
.face { width: 32px; height: 32px; border-radius: 50%; background: #8b008b; color: #fff2d8; font-size: 18px; line-height: 33px; text-align: center; margin-top: 2px; }

.gbody { flex: 1; min-height: 0; display: flex; }
.side { width: 256px; flex: none; display: flex; flex-direction: column; text-shadow: 0 1px 2px rgba(0,0,0,.6); }
.compose { width: 145px; height: 48px; margin: 16px 0 16px 8px; border-radius: 24px; background: #fff2d8; display: flex; align-items: center; padding-left: 16px; color: #47433a; font: 500 14.500px Lato, sans-serif; letter-spacing: .6px; -webkit-text-stroke: .3px #47433a; }
.compose span { padding-bottom: 3px; }
.compose svg { width: 24px; height: 24px; margin-right: 16px; }
.folders li { height: 32px; width: 240px; display: flex; align-items: center; padding: 0 13px 0 26px; font-size: 14px; letter-spacing: .2px; color: #efdfc6; }
.folders svg { width: 20px; height: 20px; fill: #c5ad98; margin-right: 18px; }
.folders .kbd { width: 18px; height: 14px; margin: 0 19px 0 1px; }
.folders em { margin-left: auto; font-style: normal; font-size: 12px; font-weight: 400; }
.folders .bold { font-weight: 700; color: #fff2d8; }
.folders .selected { background: #774d41; border-radius: 0 16px 16px 0; }
.folders .selected svg { fill: #d8c3ac; }
.rot { transform: rotate(90deg); }
.meet { border-top: 1px solid #572b22; margin-top: 1px; padding-top: 7px; height: 111px; }
h3 { font: 500 14.500px/32px Lato, sans-serif; letter-spacing: .35px; -webkit-text-stroke: .3px #efdfc6; padding-left: 26px; color: #efdfc6; }
.chat { border-top: 1px solid #572b22; flex: 1; padding-top: 7px; }
.me { display: flex; align-items: center; width: 217px; height: 41px; margin-left: 23px; border-bottom: 1px solid #75493d; padding-bottom: 12px; font: 13px "Liberation Sans", sans-serif; color: #c9b39c; }
.me-face { position: relative; width: 28px; height: 28px; margin-right: 5px; }
.me-face i { position: absolute; right: -3px; bottom: -3px; width: 10px; height: 10px; border-radius: 50%; background: #0a0; }
.me-caret { width: 7px; height: 4px; fill: #8a6a5b; margin-left: 6px; }
.me-plus { width: 12px; height: 12px; margin: 4px 10px 0 auto; }
.invites { display: flex; margin: 8px 0 0 23px; font-family: "Liberation Sans", sans-serif; }
.invites svg { width: 24px; height: 24px; margin-right: 8px; }
.invites strong, .invites small { display: block; }
.invites strong { font-size: 13px; line-height: 15px; margin-top: -1px; color: #fff2d8; }
.invites small { font-size: 11px; line-height: 13px; margin-top: 1px; font-weight: 700; color: #ccb7a0; }
.inv-q { font: 700 7px "Liberation Sans", sans-serif; fill: #13a526; }
.side-tabs { height: 33px; flex: none; border-top: 1px solid #75493d; display: flex; align-items: center; padding-left: 81px; }
.st { width: 20px; height: 20px; fill: #9d7d6e; }
.st-on { width: 37px; height: 32px; background: #4a1a12; box-shadow: inset 0 0 6px #5d2f26; margin: 0 8px 0 9px; display: flex; align-items: center; justify-content: center; padding-right: 1px; }
.st-on svg { width: 14px; height: 16px; fill: #fff2d8; }

.content { width: 1525px; flex: none; }
.toolbar { height: 48px; display: flex; align-items: center; padding-left: 16px; border-bottom: 1px solid #572b22; fill: #c5ad98; }
.toolbar svg { width: 20px; height: 20px; margin-right: 24px; }
.toolbar .i-back { margin-right: 36px; }
.toolbar .i-del { margin-right: 19px; }
.sep { width: 1px; height: 20px; background: #63392e; margin-right: 20px; }
.toolbar .i-task { margin-right: 19px; }
.toolbar .i-label { margin-right: 20px; }
.count { margin-left: auto; font-size: 12px; letter-spacing: .3px; color: #c5ad98; margin-right: 20px; width: 39px; }
.toolbar .prev { transform: scaleX(-1); fill: #6d4539; margin-right: 20px; }
.toolbar .next { margin-right: 16px; fill: #d8c3ac; }

.mail { height: 598px; background: #fff2d8; color: #222; }
.subject { display: flex; align-items: center; height: 68px; padding: 0 16px 0 72px; }
.subject h1 { font: 22px/28px Roboto, sans-serif; letter-spacing: -.25px; margin-right: auto; color: #222; white-space: nowrap; }
.subject svg { width: 20px; height: 20px; fill: #47433a; margin-left: 16px; }
.sender { display: flex; height: 56px; padding: 8px 16px 0 16px; }
.avatar { width: 40px; height: 40px; border-radius: 50%; background: #f3e8cf; border: 1px solid #e5d8be; display: flex; align-items: center; justify-content: center; margin-right: 16px; }
.avatar svg { width: 22px; height: 22px; fill: #cfc5ab; }
.who p { display: flex; align-items: center; height: 20px; font-size: 12px; letter-spacing: .32px; color: #6b675c; }
.who p:first-child b { font-size: 14px; font-weight: 700; letter-spacing: .2px; color: #222; margin-right: 3px; }
.to-caret { width: 8px; height: 4px; fill: #6b675c; margin-left: 6px; }
.meta { margin-left: auto; display: flex; align-items: center; height: 20px; font-size: 12px; letter-spacing: .3px; color: #6b675c; fill: #47433a; }
.meta svg { width: 20px; height: 20px; margin-left: 20px; }
.meta .mstar { fill: #77736a; }
.text { margin-left: 72px; font: 13px/19px "Liberation Sans", Arial, sans-serif; color: #222; white-space: nowrap; }
.actions { display: flex; gap: 12px; margin: 38px 0 0 72px; }
.actions button { height: 36px; border: 1px solid #d9ceb8; border-radius: 4px; display: flex; align-items: center; padding-bottom: 2px; font: 500 14.500px Lato, sans-serif; letter-spacing: .3px; -webkit-text-stroke: .3px #6b675c; color: #6b675c; }
.actions svg { width: 18px; height: 18px; fill: #47433a; margin-top: 2px; }
.actions .r1 { width: 104px; padding-left: 17px; }
.actions .r2 { width: 112px; padding-left: 12px; }
.actions .r3 { width: 111px; padding-left: 12px; }
.actions span { margin-left: 10px; }
.r2 span { margin-left: 9px; }

.rail { width: 56px; margin-left: auto; border-left: 1px solid #572b22; display: flex; flex-direction: column; align-items: center; padding-top: 20px; }
.cal { width: 16px; height: 16px; background: #5055cc; border-top: 2px solid #cdbfae; color: #e6d4bd; font-size: 9px; font-weight: 500; line-height: 15px; text-align: center; border-radius: 1px; }
.keep { width: 16px; height: 16px; margin-top: 40px; }
.tasks { width: 20px; height: 20px; margin-top: 38px; }
.rail i { width: 20px; height: 1px; background: #572b22; margin-top: 34px; }
.rplus { width: 12px; height: 12px; margin: 38px 1px 0 0; }
.rchev { width: 20px; height: 20px; fill: #e6d4bd; margin: auto 0 18px; }
```
